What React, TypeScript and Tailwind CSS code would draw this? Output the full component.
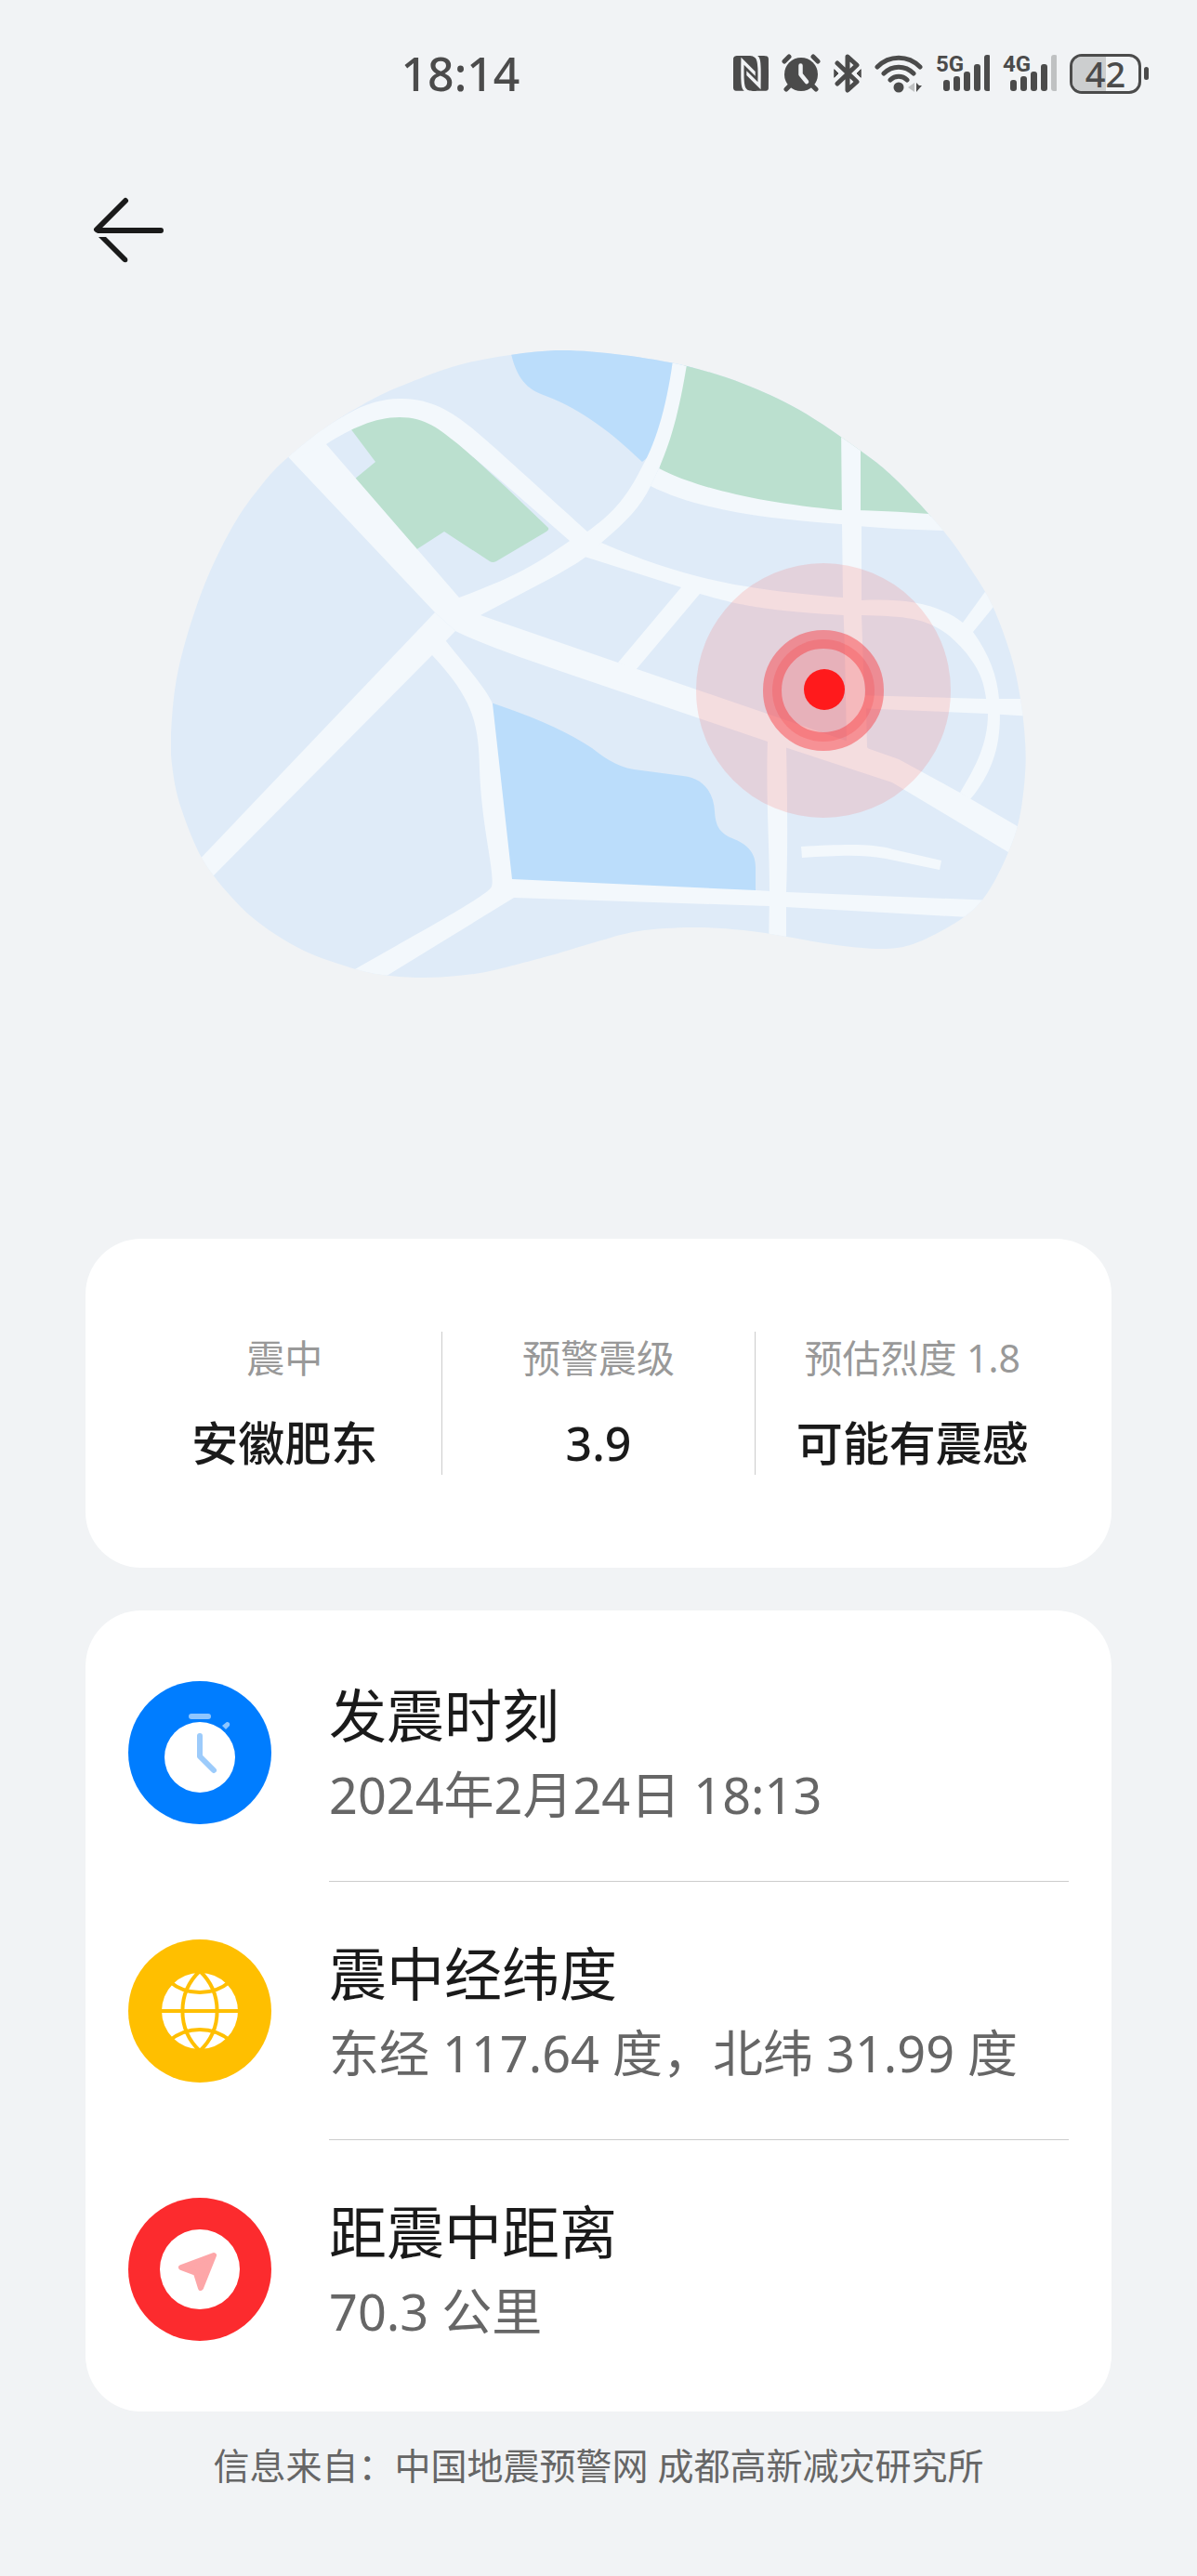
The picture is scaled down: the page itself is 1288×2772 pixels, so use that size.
import type { ReactNode } from "react";
import { SiNfc } from "react-icons/si";

type Point = [number, number];

const INK = "#4b4b4b";
const ROAD = "#f3f8fc";

/** Turns a list of points into a smooth closed outline. */
function smoothOutline(points: Point[]): string {
  const n = points.length;
  const at = (i: number) => points[(i + n) % n];
  let d = `M${points[0][0]} ${points[0][1]}`;
  for (let i = 0; i < n; i++) {
    const [a, b, c, e] = [at(i - 1), at(i), at(i + 1), at(i + 2)];
    d += `C${b[0] + (c[0] - a[0]) / 6} ${b[1] + (c[1] - a[1]) / 6} ${c[0] - (e[0] - b[0]) / 6} ${c[1] - (e[1] - b[1]) / 6} ${c[0]} ${c[1]}`;
  }
  return d + "Z";
}

const land = smoothOutline([
  [184, 789], [186, 830], [195, 870], [217, 923], [247, 963], [280, 994], [327, 1023], [383, 1043],
  [420, 1050], [457, 1052], [492, 1050], [527, 1045], [593, 1028], [640, 1014], [687, 1002], [745, 998],
  [800, 1001], [847, 1008], [900, 1017], [953, 1021], [990, 1013], [1037, 987], [1063, 960], [1085, 917],
  [1097, 880], [1103, 833], [1103, 797], [1098, 752], [1088, 706], [1068, 652], [1045, 613], [1015, 571],
  [965, 517], [926, 485], [860, 441], [800, 413], [739, 394], [670, 382], [605, 377], [549, 382],
  [493, 393], [440, 412], [400, 430], [352, 459], [310, 492], [283, 520], [250, 567], [217, 637], [192, 720],
]);

const roads = [
  // north-west avenue
  "M300 481L468 659L490 679L517 662L494 643L351 478L340 440L300 460Z",
  // curved road round the park
  "M340 466C372 447 392 430 430 429C462 428 486 443 507 460C530 479 560 507 632 572L647 584L629 599L613 582L533 512L493 478C473 462 458 449 430 449C403 449 378 461 351 478L325 490Z",
  // north-south boulevard
  "M725 380C719 430 707 475 691 502C674 536 659 553 632 572L613 582C570 612 550 622 494 643L480 655L500 672L517 662L593 622C629 602 633 598 647 584C672 563 690 545 700 523L709 504C724 470 732 437 741 380Z",
  // northern road
  "M709 504C747 524 815 541 905 549C940 549 970 551 1000 553L1030 554L1030 571L1015 571C980 570 940 568 905 564C820 558 750 548 700 523Z",
  // middle road
  "M647 584C740 624 800 634 907 643L927 646C970 644 1007 648 1036 670L1062 634L1078 642L1047 680C1065 705 1073 728 1075 752C1079 796 1070 829 1044 860L1033 853C1050 825 1063 800 1063 768C1060 735 1056 724 1040 703C1010 668 990 663 927 662L908 662C820 657 795 651 753 639L684 721L665 713L733 632L629 599Z",
  // eastern road
  "M920 748L1060 752L1110 752L1110 771L1063 768L920 762Z",
  // north-east street
  "M905 455L926 455L926 549L927 566L927 660L929 720L932 762L933 804L945 820L900 810L911 797L909 700L907 643L906 564Z",
  // main avenue
  "M490 650L517 662L665 713L910 797L967 817L1033 853L1110 898L1110 932L960 842L826 798L620 728C570 711 520 694 490 679Z",
  // south-west avenue
  "M468 659L205 935L222 950L465 705L490 679Z",
  // lakeside road
  "M475 680L480 690L488 700C506 722 523 742 530 757L551 946L813 958L847 960L1070 969L1060 988L827 975L553 966L408 1055L365 1053C420 1020 525 965 529 954C533 940 518 890 516 827C515 775 507 750 465 705L460 695Z",
  // southern street
  "M826 796C824 860 828 910 828 960L827 1030L846 1030L846 960C848 910 847 850 846 803Z",
  // short lane
  "M862 911C905 909 935 907 961 914L1013 926L1011 936L953 924C925 919 900 921 863 923Z",
];

function QuakeMap() {
  return (
    <svg viewBox="184 376 920 678" className="block w-[920px] max-w-full" role="img" aria-label="震中地图">
      <clipPath id="land">
        <path d={land} />
      </clipPath>
      <g clipPath="url(#land)">
        <rect x="184" y="376" width="920" height="678" fill="#dfebf8" />
        <path fill="#bbddfb" d="M549 376C554 402 564 417 582 424C620 438 650 458 691 497L760 440L740 370Z" />
        <path
          fill="#bbddfb"
          d="M528 756C573 771 610 787 637 805C655 819 668 827 690 829L735 835C756 837 768 852 769 873C770 890 775 897 790 903C807 910 813 920 813 933L813 962L548 950Z"
        />
        <path fill="#bbe0cf" d="M741 370L709 506C770 535 850 545 905 552L1010 556L1040 480Z" />
        <path
          fill="#bbe0cf"
          d="M377 461L404 497L381 516L447 592L478 572L527 604Q530 606 534 604L588 572Q592 569 589 567L543 523L493 477C473 461 462 448 430 448Q402 448 377 461Z"
        />
        {roads.map((d) => (
          <path key={d} d={d} fill={ROAD} />
        ))}
      </g>
      <circle cx="886" cy="743" r="137" fill="rgba(255,65,60,0.15)" />
      <circle cx="886" cy="743" r="55" fill="none" stroke="rgba(247,70,76,0.5)" strokeWidth="20" />
      <circle cx="886" cy="743" r="55" fill="rgba(250,45,50,0.2)" />
      <circle cx="887" cy="742" r="22" fill="#ff1a1c" />
    </svg>
  );
}

function AlarmIcon() {
  return (
    <svg width="42" height="42" viewBox="0 0 42 42" fill="none" stroke={INK} strokeLinecap="round">
      <circle cx="21" cy="22" r="18" fill={INK} stroke="none" />
      <path d="M3 8L8 3M34 3L39 8M8 35L5 38M34 35L37 38" strokeWidth="5" />
      <path d="M20.500 12.500V22L27 30" stroke="#f1f3f5" strokeWidth="4.500" strokeLinejoin="round" />
    </svg>
  );
}

function BluetoothIcon() {
  return (
    <svg width="30" height="42" viewBox="0 0 30 42" fill="none" stroke={INK} strokeLinecap="round" strokeLinejoin="round">
      <path d="M4 10L25 30L15 39V23M15 19V3L25 12L4 32" strokeWidth="5" />
      <path d="M1 17L5 21L1 25ZM29 17L25 21L29 25Z" fill={INK} strokeWidth="1" />
    </svg>
  );
}

function WifiIcon() {
  return (
    <svg width="52" height="42" viewBox="0 0 52 42" fill="none" stroke={INK} strokeWidth="5" strokeLinecap="round">
      <path d="M3 14C16 1 36 1 49 14M10 21C19 12 33 12 42 21M17 28C22 23 30 23 35 28" />
      <circle cx="26" cy="36" r="5.500" fill={INK} stroke="none" />
      <path d="M43 31V41L36 36Z" fill="#bfc1c2" stroke="none" />
      <path d="M45 31V41L51 34H48Z" fill={INK} stroke="none" />
    </svg>
  );
}

function SignalIcon({ label, level }: { label: string; level: number }) {
  const tops = [28, 24, 19, 11, 1];
  return (
    <span className="relative block h-[42px] w-[58px]">
      <span className="absolute top-0 left-0 font-['Liberation_Sans_Narrow','Roboto'] text-[24px] leading-[22px] font-bold">
        {label}
      </span>
      <svg width="58" height="42" viewBox="0 0 58 42">
        {tops.map((top, i) => (
          <rect key={top} x={8 + i * 11} y={top} width="7" height={40 - top} rx="3" fill={i < level ? INK : "#bfc1c2"} />
        ))}
      </svg>
    </span>
  );
}

function Battery({ level }: { level: number }) {
  return (
    <span className="flex items-center gap-[3px]">
      <span className="relative flex h-[43px] w-[77px] items-center justify-center rounded-[13px] border-[3px] border-[#4b4b4b]">
        <span className="absolute inset-y-0 left-0 rounded-l-[10px] bg-[#cccecf]" style={{ width: `${level + 8}%` }} />
        <span className="relative text-[38px] leading-[52px] font-medium">{level}</span>
      </span>
      <span className="h-[14px] w-[5px] rounded-full bg-[#4b4b4b]" />
    </span>
  );
}

function StatusBar() {
  return (
    <div className="flex h-[158px] items-center justify-between pr-[52px] pl-[33.5%] text-[#4b4b4b]">
      <span className="text-[50px] leading-[60px] font-medium">18:14</span>
      <div className="flex items-center gap-[14px]">
        <SiNfc size={38} color={INK} />
        <AlarmIcon />
        <BluetoothIcon />
        <WifiIcon />
        <SignalIcon label="5G" level={5} />
        <SignalIcon label="4G" level={4} />
        <Battery level={42} />
      </div>
    </div>
  );
}

function Stat({ label, value }: { label: string; value: string }) {
  return (
    <div className="flex flex-1 flex-col items-center justify-between border-l border-[#cccccc] text-center first:border-l-0">
      <dt className="text-[41px] leading-[56px] text-[#999999]">{label}</dt>
      <dd className="text-[50px] leading-[68px] font-medium text-[#1a1a1a]">{value}</dd>
    </div>
  );
}

function DetailRow({ icon, title, text }: { icon: ReactNode; title: string; text: string }) {
  return (
    <li className="group flex items-center gap-[62px]">
      {icon}
      <div className="flex-1 border-b border-[#cccccc] pt-[57px] pb-[50px] group-last:border-transparent">
        <h2 className="text-[62px] leading-[84px] text-[#1a1a1a]">{title}</h2>
        <p className="text-[54px] leading-[86px] text-[#666666]">{text}</p>
      </div>
    </li>
  );
}

function StopwatchIcon() {
  return (
    <svg width="154" height="154" viewBox="0 0 154 154" fill="none" strokeLinecap="round" strokeLinejoin="round">
      <circle cx="77" cy="77" r="77" fill="#007dff" />
      <circle cx="77" cy="82" r="38" fill="#ffffff" />
      <path d="M68 38H86" stroke="#8ec6ff" strokeWidth="6" />
      <path d="M101 48L106 44Q110 44 109 48L105 52Z" fill="#8ec6ff" />
      <path d="M77 59V81L92 96" stroke="#9ccbfb" strokeWidth="6" />
    </svg>
  );
}

function GlobeIcon() {
  return (
    <svg width="154" height="154" viewBox="0 0 154 154" fill="none">
      <circle cx="77" cy="77" r="77" fill="#ffbf00" />
      <circle cx="77" cy="77" r="41" fill="#ffffff" />
      <path
        d="M35 77H119M77 34A59 59 0 0 0 77 120M77 34A59 59 0 0 1 77 120M44 45A51 51 0 0 0 110 45M44 109A51 51 0 0 1 110 109"
        stroke="#ffbf00"
        strokeWidth="4"
      />
    </svg>
  );
}

function DistanceIcon() {
  return (
    <svg width="154" height="154" viewBox="0 0 154 154">
      <circle cx="77" cy="77" r="77" fill="#fc2b2e" />
      <circle cx="77" cy="77" r="43" fill="#ffffff" />
      <path d="M92 62L57 75L73 81L78 97Z" fill="#fda6a8" stroke="#fda6a8" strokeWidth="6" strokeLinejoin="round" />
    </svg>
  );
}

function BackIcon() {
  return (
    <svg width="80" height="72" viewBox="0 0 80 72" fill="none" stroke="#1a1a1a" strokeWidth="6" strokeLinecap="round" strokeLinejoin="round">
      <path d="M37 4L6 35L8 36H75" />
      <path d="M8 43H16L39 66Q40 69 38 70Q36 71 34 69Z" fill="#1a1a1a" stroke="none" />
    </svg>
  );
}

export default function App() {
  return (
    <div className="min-h-screen bg-[#f1f3f5] pb-[90px] font-['Noto_Sans','Noto_Sans_CJK_SC',sans-serif]">
      <StatusBar />
      <header className="flex h-[180px] items-center px-[98px]">
        <button type="button" aria-label="返回">
          <BackIcon />
        </button>
      </header>
      <main className="px-[92px]">
        <div className="flex justify-center pt-[38px] pb-[279px]">
          <QuakeMap />
        </div>
        <dl className="flex rounded-[60px] bg-white px-[46px] py-[100px]">
          <div className="flex h-[154px] flex-1">
            <Stat label="震中" value="安徽肥东" />
            <Stat label="预警震级" value="3.9" />
            <Stat label="预估烈度 1.8" value="可能有震感" />
          </div>
        </dl>
        <ul className="mt-[46px] rounded-[60px] bg-white px-[46px] py-[14px]">
          <DetailRow icon={<StopwatchIcon />} title="发震时刻" text="2024年2月24日 18:13" />
          <DetailRow icon={<GlobeIcon />} title="震中经纬度" text="东经 117.64 度，北纬 31.99 度" />
          <DetailRow icon={<DistanceIcon />} title="距震中距离" text="70.3 公里" />
        </ul>
      </main>
      <footer className="mt-[30px] text-center text-[39px] leading-[56px] text-[#666666]">
        信息来自：中国地震预警网 成都高新减灾研究所
      </footer>
    </div>
  );
}
